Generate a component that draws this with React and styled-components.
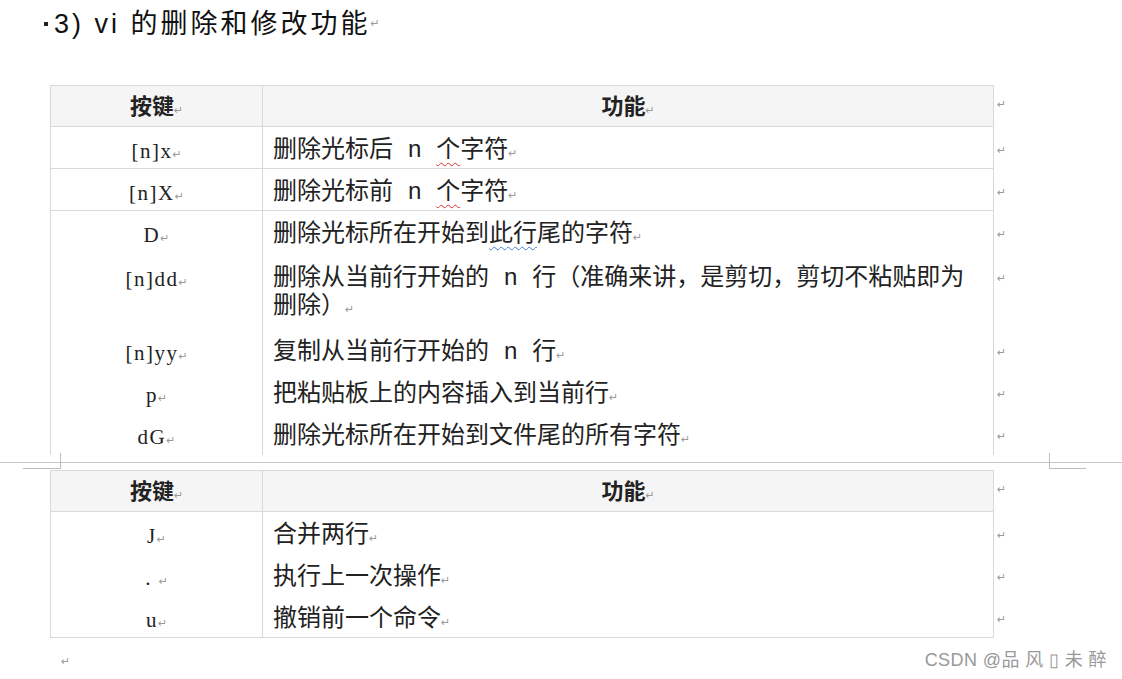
import React from 'react';
import styled, { createGlobalStyle, css } from 'styled-components';

const GlobalStyle = createGlobalStyle`
    body {
        margin: 0;
        background: #fff;
        color: #222;
        font-family: "Noto Sans CJK SC", sans-serif;
    }
`;

const LINE = '#d9d9d9';

const Page = styled.div`
    position: relative;
    width: 1122px;
    height: 679px;
    overflow: hidden;
    box-sizing: border-box;
    padding-top: 9px;
`;

const Title = styled.h1`
    display: flex;
    align-items: center;
    height: 30px;
    margin: 0 0 0 44px;
    font-family: "Liberation Sans", "Noto Sans CJK SC", sans-serif;
    font-size: 27px;
    font-weight: 400;
    line-height: 30px;
    letter-spacing: 3px;
    white-space: pre;
    color: #111;
`;

const Bullet = styled.span`
    width: 4px;
    height: 4px;
    background: #222;
    margin-right: 6px;
`;

const Table = styled.div`
    display: flex;
    flex-direction: column;
    margin-left: 50px;
    margin-top: ${p => p.$mt || 0}px;
`;

const Row = styled.div`
    display: flex;
`;

const headStyle = css`
    border-top: 1px solid ${LINE};
    background: #f5f5f5;
    font-family: "Noto Sans CJK SC", sans-serif;
    font-size: 22px;
    font-weight: 700;
    text-align: center;
    letter-spacing: 0;
`;

const Cell = styled.div`
    box-sizing: border-box;
    height: ${p => p.$h}px;
    padding: ${p => p.$pt}px 10px 0;
    line-height: 28px;
    white-space: nowrap;
    border-right: 1px solid ${LINE};
    ${p => p.$ruled && `border-bottom: 1px solid ${LINE};`}
`;

const KeyCell = styled(Cell)`
    width: 213px;
    border-left: 1px solid ${LINE};
    text-align: center;
    font-family: "Liberation Serif", "Noto Sans CJK SC", serif;
    font-size: 21px;
    letter-spacing: 1.5px;
    ${p => p.$head && headStyle}
`;

const FuncCell = styled(Cell)`
    width: 731px;
    font-family: "Liberation Mono", "Noto Sans CJK SC", monospace;
    font-size: 24px;
    ${p => p.$head && headStyle}
`;

const EndMark = styled.span`
    padding-top: ${p => p.$pt}px;
    margin-left: 3px;
    line-height: 28px;
    font-family: "DejaVu Sans", sans-serif;
    font-size: 11px;
    color: #999;
`;

const Pm = styled.span`
    font-family: "DejaVu Sans", sans-serif;
    font-size: 11px;
    font-weight: 400;
    line-height: 10px;
    color: #999;
    letter-spacing: 0;
`;

const Wavy = styled.span`
    text-decoration: underline wavy ${p => p.$color};
    text-decoration-thickness: 1px;
    text-underline-offset: 5px;
`;

const PageBreak = styled.div`
    position: relative;
    height: 1px;
    margin-top: 7px;
    background: #c6c6c6;

    &::before, &::after {
        content: '';
        position: absolute;
        top: -9px;
        width: 37px;
        height: 16px;
        box-sizing: border-box;
        border-bottom: 1px solid #bdbdbd;
    }
    &::before {
        left: 23px;
        width: 38px;
        border-right: 1px solid #bdbdbd;
    }
    &::after {
        left: 1049px;
        border-left: 1px solid #bdbdbd;
    }
`;

const Trailing = styled.div`
    margin: 14px 0 0 61px;
    line-height: 20px;
    font-family: "DejaVu Sans", sans-serif;
    font-size: 11px;
    color: #999;
`;

const Watermark = styled.div`
    position: absolute;
    right: 15px;
    bottom: 8px;
    font-family: "Liberation Sans", "Noto Sans CJK SC", sans-serif;
    font-size: 18px;
    color: #999;
    letter-spacing: 0.4px;
`;

// [height, padding-top]
const SIZES = {
    head: [42, 4],
    ruled: [42, 10],
    plain: [42, 10],
    tall: [76, 12],
};

const TableRow = ({ k, kind = 'plain', children }) => {
    const [h, pt] = SIZES[kind];
    const head = kind === 'head';
    const ruled = kind === 'head' || kind === 'ruled';
    return (
        <Row>
            <KeyCell $h={h} $pt={pt} $head={head} $ruled={ruled}>
                {k}<Pm>↵</Pm>
            </KeyCell>
            <FuncCell $h={h} $pt={pt} $head={head} $ruled={ruled}>
                {children}
                {kind !== 'tall' && <Pm>↵</Pm>}
            </FuncCell>
            <EndMark $pt={pt + (head ? 2 : 0)}>↵</EndMark>
        </Row>
    );
};

const App = () => {
    return (
        <Page>
            <GlobalStyle />
            <Title><Bullet />3) vi 的删除和修改功能<Pm>↵</Pm></Title>

            <Table $mt={46}>
                <TableRow k="按键" kind="head">功能</TableRow>
                <TableRow k="[n]x" kind="ruled">
                    删除光标后 n <Wavy $color="#d33">个</Wavy>字符
                </TableRow>
                <TableRow k="[n]X" kind="ruled">
                    删除光标前 n <Wavy $color="#d33">个</Wavy>字符
                </TableRow>
                <TableRow k="D">
                    删除光标所在开始到<Wavy $color="#4a7fd6">此行</Wavy>尾的字符
                </TableRow>
                <TableRow k="[n]dd" kind="tall">
                    删除从当前行开始的 n 行（准确来讲，是剪切，剪切不粘贴即为<br />删除）<Pm>↵</Pm>
                </TableRow>
                <TableRow k="[n]yy">复制从当前行开始的 n 行</TableRow>
                <TableRow k="p">把粘贴板上的内容插入到当前行</TableRow>
                <TableRow k="dG">删除光标所在开始到文件尾的所有字符</TableRow>
            </Table>

            <PageBreak />

            <Table $mt={7}>
                <TableRow k="按键" kind="head">功能</TableRow>
                <TableRow k="J">合并两行</TableRow>
                <TableRow k=". ">执行上一次操作</TableRow>
                <TableRow k="u" kind="ruled">撤销前一个命令</TableRow>
            </Table>

            <Trailing>↵</Trailing>

            <Watermark>CSDN @品 风 ▯ 未 醉</Watermark>
        </Page>
    );
};

export default App;
